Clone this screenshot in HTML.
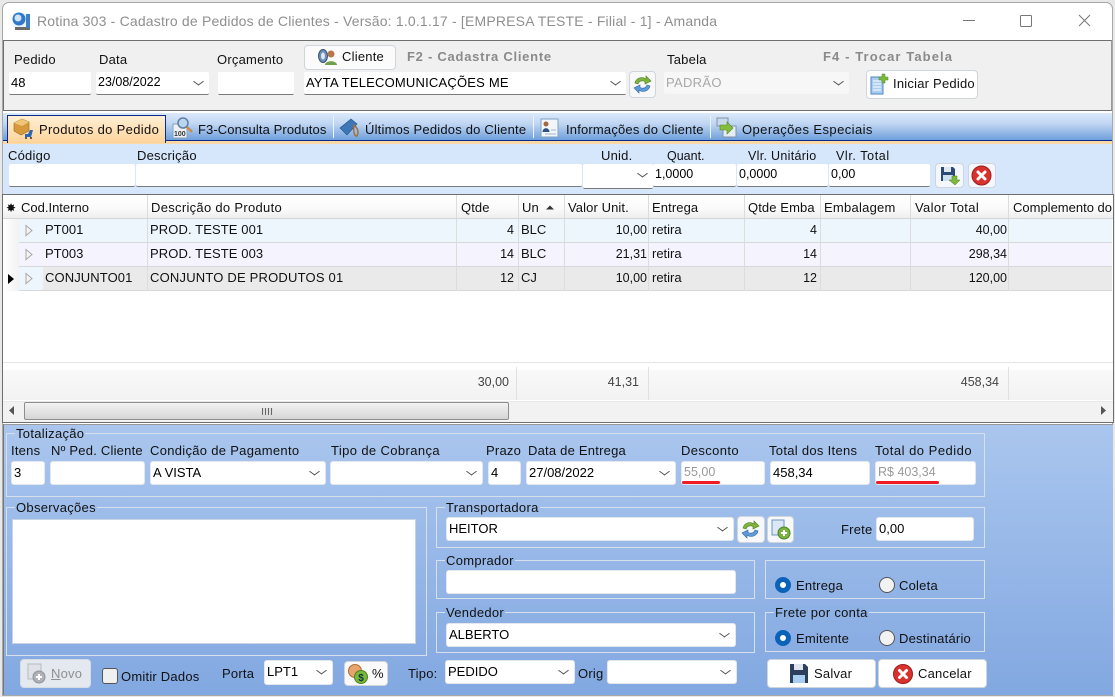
<!DOCTYPE html>
<html lang="pt"><head><meta charset="utf-8"><title>Rotina 303</title>
<style>
*{box-sizing:border-box}
html,body{margin:0;padding:0;width:1115px;height:697px;overflow:hidden;background:#e8e8e8}
body{font:13px "Liberation Sans",sans-serif;color:#111;position:relative}
.a,.t,.i,.b,.g{position:absolute}
.t{white-space:nowrap;line-height:16px;letter-spacing:.22px}
.d{letter-spacing:0}
.i{background:#fff;border-radius:2px;border-bottom:1px solid #7a7a7a;line-height:21px;padding-left:2px;white-space:nowrap;color:#000;font-size:13px}
.n{font-size:12.500px}
.s:after{content:"";position:absolute;right:7px;top:6px;width:6px;height:6px;border-right:1px solid #555;border-bottom:1px solid #555;transform:scale(1.1,.8) rotate(45deg)}
.l{background:#fff;border:1px solid #e4e8ee;border-radius:3px}
.b{background:#fff;border:1px solid #d0d5dc;border-radius:4px;white-space:nowrap}
.g{border:1px solid #d6dfea}
.g>span{position:absolute;left:8px;top:-8px;line-height:15px;padding:0 1px;white-space:nowrap;letter-spacing:.3px}
.c{position:absolute;top:0;height:100%;border-right:1px solid #dcdcdc}
.r{text-align:right;letter-spacing:0;font-size:12.500px}
.h{font-size:13px;letter-spacing:.1px}
svg{position:absolute;overflow:visible}
.rd{position:absolute;width:16px;height:16px;border-radius:50%}
.on{background:#fff;border:5px solid #0a63b8}
.off{background:#f2f2f2;border:1px solid #555}
</style></head><body>
<!-- window -->
<div class="a" style="left:2px;top:2px;width:1111px;height:694px;background:#fff;border:1px solid #a8a8a8;border-radius:7px 7px 0 0"></div>
<svg style="left:11px;top:11px" width="20" height="20" viewBox="0 0 20 20"><path d="M4 15h15v4H4z" fill="#6b6b6b"/><path d="M15 3h4v14h-4z" fill="#3f7fc6"/><path d="M2 2h13v14H2z" fill="#eaf2fb"/><circle cx="8" cy="8" r="6.500" fill="#2f78cb"/><circle cx="7" cy="7" r="3.500" fill="#cfe3f8"/></svg>
<div class="t" style="left:37px;top:13px;font-size:14px;color:#8f8f8f;letter-spacing:.185px">Rotina 303 - Cadastro de Pedidos de Clientes - Versão: 1.0.1.17 - [EMPRESA TESTE - Filial - 1] - Amanda</div>
<svg style="left:960px;top:12px" width="140" height="18" viewBox="0 0 140 18" fill="none" stroke="#777" stroke-width="1"><path d="M3 8.500h12"/><rect x="60.500" y="3.500" width="11" height="11" rx="1"/><path d="M119 3l11 11M130 3l-11 11"/></svg>

<!-- top panel -->
<div class="a" style="left:3px;top:40px;width:1109px;height:71px;background:#f0f0f0;border:1px solid #6e6e6e;border-right-color:#999"></div>
<div class="t" style="left:14px;top:52px">Pedido</div>
<div class="t" style="left:99px;top:52px">Data</div>
<div class="t" style="left:217px;top:52px">Orçamento</div>
<div class="i" style="left:9px;top:72px;width:82px;height:23px">48</div>
<div class="i s n" style="left:96px;top:72px;width:113px;height:23px">23/08/2022</div>
<div class="i" style="left:218px;top:72px;width:76px;height:23px"></div>
<div class="b" style="left:304px;top:45px;width:92px;height:25px;background:#fbfbfb"></div>
<svg style="left:317px;top:48px" width="20" height="18" viewBox="0 0 20 18"><ellipse cx="6" cy="8" rx="4.500" ry="6.500" fill="#6d8fb5" stroke="#34506e"/><ellipse cx="6" cy="8" rx="2" ry="3.500" fill="#dde8f3"/><circle cx="14" cy="6" r="3.500" fill="#b9764a"/><path d="M8 17c0-5 12-5 12 0z" fill="#70a04a"/></svg>
<div class="t" style="left:342px;top:49px">Cliente</div>
<div class="t" style="left:407px;top:49px;font-weight:bold;color:#8a8a8a;letter-spacing:.74px">F2 - Cadastra Cliente</div>
<div class="i s" style="left:304px;top:72px;width:322px;height:23px;letter-spacing:.2px">AYTA TELECOMUNICAÇÕES ME</div>
<div class="b" style="left:629px;top:71px;width:27px;height:27px;background:#f8f8f8"></div>
<svg style="left:632px;top:74px" width="21" height="21" viewBox="0 0 21 21"><path d="M3 9C4 4 10 2 14 5V2l5 5-6 3V7.500C10 6 7 7 6 10z" fill="#7fb53a" stroke="#4d7d1f" stroke-width=".6"/><path d="M18 12c-1 5-7 7-11 4v3l-5-5 6-3v2.500c3 1.500 6 .5 7-2.500z" fill="#5f9bdc" stroke="#30679f" stroke-width=".6"/></svg>
<div class="t" style="left:667px;top:52px">Tabela</div>
<div class="t" style="left:823px;top:49px;font-weight:bold;color:#8a8a8a;letter-spacing:1.1px">F4 - Trocar Tabela</div>
<div class="i s" style="left:664px;top:72px;width:185px;height:22px;background:#f7f7f7;border:0;color:#a8a8a8;letter-spacing:.3px">PADRÃO</div>
<div class="b" style="left:866px;top:70px;width:112px;height:29px"></div>
<svg style="left:869px;top:73px" width="20" height="22" viewBox="0 0 20 22"><path d="M2 4h12v17H2z" fill="#a9cdf2" stroke="#4d86c2"/><path d="M4 8h8M4 11h8M4 14h8M4 17h8" stroke="#fff"/><path d="M13 1h3v3h3v3h-3v3h-3V7h-3V4h3z" fill="#7cba3c" stroke="#4e8a1c" stroke-width=".5"/></svg>
<div class="t" style="left:893px;top:76px">Iniciar Pedido</div>

<!-- tab strip -->
<div class="a" style="left:3px;top:113px;width:1109px;height:28px;background:linear-gradient(#dbe9fb,#c0d6f3 40%,#6f9fdb);border-bottom:1px solid #0b2a8a"></div>
<div class="a" style="left:3px;top:141px;width:1109px;height:3px;background:#fbd9a6"></div>
<div class="a" style="left:7px;top:115px;width:159px;height:28px;background:linear-gradient(#fff0d4,#fdd39b);border:1px solid #0b2a8a;border-bottom:0"></div>
<svg style="left:12px;top:117px" width="22" height="22" viewBox="0 0 22 22"><path d="M2 6l8-4 7 3v9l-8 4-7-4z" fill="#d69a3c" stroke="#a2691c" stroke-width=".6"/><path d="M2 6l8 3 7-4-7-3z" fill="#f0c679"/><path d="M13 20h6l2-7h-3l-2 4h-3z" fill="#2b66b5"/><circle cx="14" cy="21" r="1" fill="#333"/><circle cx="19" cy="21" r="1" fill="#333"/></svg>
<div class="t" style="left:39px;top:122px;letter-spacing:.33px">Produtos do Pedido</div>
<svg style="left:172px;top:117px" width="22" height="22" viewBox="0 0 22 22"><path d="M1 7h14v14H1z" fill="#eef2f7" stroke="#8aa0bb"/><circle cx="11" cy="6" r="5" fill="#bcd5ef" stroke="#5e7fa6" stroke-width="1.500"/><path d="M15 10l5 5" stroke="#c98a4a" stroke-width="2.500"/><text x="2" y="19" font-size="7" font-weight="bold" fill="#333" font-family="Liberation Sans">100</text></svg>
<div class="t" style="left:198px;top:122px;letter-spacing:.1px">F3-Consulta Produtos</div>
<div class="a" style="left:333px;top:116px;width:1px;height:22px;background:#eef4fc"></div>
<svg style="left:339px;top:117px" width="22" height="22" viewBox="0 0 22 22"><path d="M1 11L12 2l6 5L8 18z" fill="#3f76b8" stroke="#24517f" stroke-width=".6"/><path d="M14 8c5 2 6 8 4 11-2 1-4-4-3-9" fill="none" stroke="#a4703d" stroke-width="1.500"/></svg>
<div class="t" style="left:365px;top:122px;letter-spacing:.2px">Últimos Pedidos do Cliente</div>
<div class="a" style="left:533px;top:116px;width:1px;height:22px;background:#eef4fc"></div>
<svg style="left:540px;top:118px" width="19" height="20" viewBox="0 0 19 20"><path d="M1 1h17v18H1z" fill="#f2f6fb" stroke="#7fa0c6"/><circle cx="6" cy="6" r="2.500" fill="#a5673c"/><path d="M2.500 14c0-5 7-5 7 0z" fill="#2f4f7f"/><path d="M5 16h11M11 12h5" stroke="#9db4cf"/></svg>
<div class="t" style="left:566px;top:122px;letter-spacing:.18px">Informações do Cliente</div>
<div class="a" style="left:710px;top:116px;width:1px;height:22px;background:#eef4fc"></div>
<svg style="left:716px;top:117px" width="21" height="21" viewBox="0 0 21 21"><path d="M1 1h11v8H1z" fill="#c9d9ea" stroke="#7d93ad"/><path d="M7 9h13v11H7z" fill="#e6edf5" stroke="#7d93ad"/><path d="M4 8h7V5l6 6-6 6v-4H4z" fill="#86bd3f" stroke="#55861f" stroke-width=".6"/></svg>
<div class="t" style="left:742px;top:122px;letter-spacing:.42px">Operações Especiais</div>

<!-- product entry -->
<div class="a" style="left:3px;top:144px;width:1109px;height:50px;background:#d6e6fb"></div>
<div class="t" style="left:8px;top:148px">Código</div>
<div class="t" style="left:137px;top:148px">Descrição</div>
<div class="t" style="left:601px;top:148px">Unid.</div>
<div class="t" style="left:667px;top:148px;font-size:12.500px;letter-spacing:0">Quant.</div>
<div class="t" style="left:748px;top:148px;font-size:12.500px;letter-spacing:.3px">Vlr. Unitário</div>
<div class="t" style="left:836px;top:148px;font-size:12.500px;letter-spacing:.6px">Vlr. Total</div>
<div class="i" style="left:9px;top:164px;width:126px;height:23px"></div>
<div class="i" style="left:136px;top:164px;width:446px;height:23px"></div>
<div class="i s" style="left:583px;top:164px;width:70px;height:25px"></div>
<div class="i n" style="left:653px;top:164px;width:83px;height:23px">1,0000</div>
<div class="i n" style="left:737px;top:164px;width:91px;height:23px">0,0000</div>
<div class="i n" style="left:829px;top:164px;width:101px;height:23px">0,00</div>
<div class="b" style="left:935px;top:163px;width:29px;height:25px;background:#f4f7fb"></div>
<svg style="left:940px;top:166px" width="20" height="19" viewBox="0 0 20 19"><path d="M1 1h12l2 2v12H1z" fill="#2c4a73"/><path d="M4 1h7v5H4z" fill="#dfe7f1"/><path d="M3 9h10v6H3z" fill="#cfdff2"/><path d="M12 10h5v4h3l-5 5-6-5h3z" fill="#7cb83a" stroke="#507f1c" stroke-width=".5"/></svg>
<div class="b" style="left:968px;top:163px;width:28px;height:25px;background:#f4f7fb"></div>
<svg style="left:971px;top:165px" width="21" height="21" viewBox="0 0 21 21"><circle cx="10.500" cy="10.500" r="9.500" fill="#d8322e" stroke="#9d1f1c"/><path d="M7 7l7 7M14 7l-7 7" stroke="#fff" stroke-width="3" stroke-linecap="round"/></svg>

<!-- grid -->
<div class="a" style="left:2px;top:194px;width:1112px;height:229px;background:#fff;border:1px solid #6e6e6e;overflow:hidden"></div>
<div class="a" style="left:3px;top:195px;width:1110px;height:24px;background:linear-gradient(#fff,#fafafa 60%,#eeeeee);border-bottom:1px solid #d5d5d5">
<div class="c" style="left:144px"></div><div class="c" style="left:453px"></div><div class="c" style="left:515px"></div><div class="c" style="left:561px"></div><div class="c" style="left:645px"></div><div class="c" style="left:741px"></div><div class="c" style="left:817px"></div><div class="c" style="left:907px"></div><div class="c" style="left:1005px"></div>
</div>
<div class="t" style="left:6px;top:200px;font-size:12px">✸</div>
<div class="t h" style="left:21px;top:200px;letter-spacing:0">Cod.Interno</div>
<div class="t h" style="left:151px;top:200px;letter-spacing:.3px">Descrição do Produto</div>
<div class="t h" style="left:461px;top:200px">Qtde</div>
<div class="t h" style="left:522px;top:200px">Un</div>
<svg style="left:546px;top:205px" width="8" height="5" viewBox="0 0 8 5"><path d="M0 4.500L4 .5l4 4z" fill="#333"/></svg>
<div class="t h" style="left:568px;top:200px">Valor Unit.</div>
<div class="t h" style="left:652px;top:200px">Entrega</div>
<div class="t h" style="left:748px;top:200px">Qtde Emba</div>
<div class="t h" style="left:824px;top:200px;letter-spacing:.25px">Embalagem</div>
<div class="t h" style="left:915px;top:200px;letter-spacing:.35px">Valor Total</div>
<div class="a" style="left:1013px;top:200px;width:99px;height:16px;overflow:hidden;white-space:nowrap;line-height:16px;font-size:13px">Complemento do</div>

<!-- rows -->
<div class="a" style="left:19px;top:219px;width:1093px;height:24px;background:#eef6fd;border-bottom:1px solid #d8d8d8"></div>
<div class="a" style="left:19px;top:243px;width:1093px;height:24px;background:#f5f3fd;border-bottom:1px solid #d8d8d8"></div>
<div class="a" style="left:19px;top:267px;width:1093px;height:24px;background:#eaeaea;border-bottom:1px solid #d8d8d8"></div>
<div class="a" style="left:19px;top:267px;width:24px;height:23px;background:#eef6fd"></div>
<div class="a" style="left:3px;top:219px;width:16px;height:72px;background:linear-gradient(90deg,#fff,#f2f2f2)"></div>
<div class="a" style="left:147px;top:219px;width:1px;height:72px;background:#dcdcdc"></div><div class="a" style="left:456px;top:219px;width:1px;height:72px;background:#dcdcdc"></div><div class="a" style="left:518px;top:219px;width:1px;height:72px;background:#dcdcdc"></div><div class="a" style="left:564px;top:219px;width:1px;height:72px;background:#dcdcdc"></div><div class="a" style="left:648px;top:219px;width:1px;height:72px;background:#dcdcdc"></div><div class="a" style="left:744px;top:219px;width:1px;height:72px;background:#dcdcdc"></div><div class="a" style="left:820px;top:219px;width:1px;height:72px;background:#dcdcdc"></div><div class="a" style="left:910px;top:219px;width:1px;height:72px;background:#dcdcdc"></div><div class="a" style="left:1008px;top:219px;width:1px;height:72px;background:#dcdcdc"></div>
<svg style="left:25px;top:225px" width="8" height="60" viewBox="0 0 8 60" fill="#f5f5f5" stroke="#a8a8a8"><path d="M1 .5l6 5-6 5zM1 24.500l6 5-6 5zM1 48.500l6 5-6 5z"/></svg>
<svg style="left:8px;top:274px" width="6" height="10" viewBox="0 0 6 10"><path d="M0 0l6 5-6 5z" fill="#000"/></svg>
<div class="t d" style="left:45px;top:222px">PT001</div><div class="t" style="left:150px;top:222px;letter-spacing:.1px">PROD. TESTE 001</div><div class="t r" style="left:489px;width:25px;top:222px">4</div><div class="t d" style="left:521px;top:222px">BLC</div><div class="t r" style="left:590px;width:57px;top:222px">10,00</div><div class="t d" style="left:652px;top:222px">retira</div><div class="t r" style="left:787px;width:30px;top:222px">4</div><div class="t r" style="left:950px;width:57px;top:222px">40,00</div>
<div class="t d" style="left:45px;top:246px">PT003</div><div class="t" style="left:150px;top:246px;letter-spacing:.1px">PROD. TESTE 003</div><div class="t r" style="left:489px;width:25px;top:246px">14</div><div class="t d" style="left:521px;top:246px">BLC</div><div class="t r" style="left:590px;width:57px;top:246px">21,31</div><div class="t d" style="left:652px;top:246px">retira</div><div class="t r" style="left:787px;width:30px;top:246px">14</div><div class="t r" style="left:950px;width:57px;top:246px">298,34</div>
<div class="t" style="left:45px;top:270px;letter-spacing:.1px">CONJUNTO01</div><div class="t" style="left:150px;top:270px;letter-spacing:.2px">CONJUNTO DE PRODUTOS 01</div><div class="t r" style="left:489px;width:25px;top:270px">12</div><div class="t d" style="left:521px;top:270px">CJ</div><div class="t r" style="left:590px;width:57px;top:270px">10,00</div><div class="t d" style="left:652px;top:270px">retira</div><div class="t r" style="left:787px;width:30px;top:270px">12</div><div class="t r" style="left:950px;width:57px;top:270px">120,00</div>

<!-- footer -->
<div class="a" style="left:3px;top:362px;width:1110px;height:1px;background:#e4e4e4"></div>
<div class="a" style="left:3px;top:370px;width:1110px;height:30px;background:linear-gradient(#f9f9f9,#f2f2f2)"></div>
<div class="a" style="left:516px;top:367px;width:1px;height:33px;background:#e0e0e0"></div><div class="a" style="left:648px;top:367px;width:1px;height:33px;background:#e0e0e0"></div><div class="a" style="left:1008px;top:367px;width:1px;height:33px;background:#e0e0e0"></div>
<div class="t r" style="left:450px;width:59px;top:374px;color:#444">30,00</div>
<div class="t r" style="left:580px;width:59px;top:374px;color:#444">41,31</div>
<div class="t r" style="left:940px;width:59px;top:374px;color:#444">458,34</div>
<!-- scrollbar -->
<div class="a" style="left:3px;top:401px;width:1110px;height:21px;background:#f2f2f2;border-top:1px solid #e8e8e8"></div>
<div class="a" style="left:24px;top:402px;width:485px;height:18px;background:linear-gradient(#f3f3f3,#d5d5d5);border:1px solid #8e8e8e;border-radius:2px"></div>
<div class="a" style="left:262px;top:408px;width:11px;height:7px;background:repeating-linear-gradient(90deg,#666 0 1px,#ddd 1px 3px)"></div>
<svg style="left:9px;top:406px" width="5" height="9" viewBox="0 0 5 9"><path d="M5 0v9L0 4.500z" fill="#555"/></svg>
<svg style="left:1101px;top:406px" width="5" height="9" viewBox="0 0 5 9"><path d="M0 0v9l5-4.500z" fill="#555"/></svg>

<!-- bottom panel -->
<div class="a" style="left:3px;top:424px;width:1110px;height:271px;background:linear-gradient(#aac6ee,#82a8e1);border-left:1px solid #777;border-top:1px solid #999"></div>
<div class="g" style="left:6px;top:433px;width:979px;height:64px"><span style="background:#a9c5ee">Totalização</span></div>
<div class="t" style="left:11px;top:443px">Itens</div>
<div class="t" style="left:51px;top:443px">Nº Ped. Cliente</div>
<div class="t" style="left:150px;top:443px;letter-spacing:.3px">Condição de Pagamento</div>
<div class="t" style="left:331px;top:443px;letter-spacing:.38px">Tipo de Cobrança</div>
<div class="t" style="left:486px;top:443px">Prazo</div>
<div class="t" style="left:528px;top:443px">Data de Entrega</div>
<div class="t" style="left:681px;top:443px;letter-spacing:.38px">Desconto</div>
<div class="t" style="left:769px;top:443px;letter-spacing:.3px">Total dos Itens</div>
<div class="t" style="left:875px;top:443px;letter-spacing:.5px">Total do Pedido</div>
<div class="i l" style="left:11px;top:461px;width:34px;height:24px">3</div>
<div class="i l" style="left:50px;top:461px;width:95px;height:24px"></div>
<div class="i l s" style="left:150px;top:461px;width:176px;height:24px">A VISTA</div>
<div class="i l s" style="left:330px;top:461px;width:153px;height:24px"></div>
<div class="i l" style="left:488px;top:461px;width:33px;height:24px">4</div>
<div class="i l s" style="left:526px;top:461px;width:150px;height:24px">27/08/2022</div>
<div class="i l" style="left:681px;top:461px;width:84px;height:24px;color:#9a9a9a;font-size:12.500px">55,00</div>
<div class="i l" style="left:770px;top:461px;width:100px;height:24px">458,34</div>
<div class="i l" style="left:875px;top:461px;width:101px;height:24px;color:#9a9a9a;font-size:12.500px">R$ 403,34</div>
<div class="a" style="left:682px;top:481px;width:38px;height:3px;background:#ee1c25;border-radius:2px"></div>
<div class="a" style="left:876px;top:481px;width:63px;height:3px;background:#ee1c25;border-radius:2px"></div>

<div class="g" style="left:6px;top:507px;width:421px;height:149px"><span style="background:#9ebdea">Observações</span></div>
<div class="a" style="left:12px;top:519px;width:404px;height:125px;background:#fff;border:1px solid #c8d4e4"></div>

<div class="g" style="left:436px;top:507px;width:549px;height:41px"><span style="background:#9ebdea">Transportadora</span></div>
<div class="i l s" style="left:446px;top:517px;width:288px;height:24px">HEITOR</div>
<div class="b" style="left:737px;top:516px;width:28px;height:27px;background:#f6f8fb"></div>
<svg style="left:740px;top:519px" width="21" height="21" viewBox="0 0 21 21"><path d="M3 9C4 4 10 2 14 5V2l5 5-6 3V7.500C10 6 7 7 6 10z" fill="#7fb53a" stroke="#4d7d1f" stroke-width=".6"/><path d="M18 12c-1 5-7 7-11 4v3l-5-5 6-3v2.500c3 1.500 6 .5 7-2.500z" fill="#5f9bdc" stroke="#30679f" stroke-width=".6"/></svg>
<div class="b" style="left:767px;top:516px;width:27px;height:27px;background:#f6f8fb"></div>
<svg style="left:770px;top:519px" width="21" height="21" viewBox="0 0 21 21"><path d="M2 1h12v15H2z" fill="#dbe7f5" stroke="#6e93c0"/><circle cx="14" cy="14" r="6" fill="#79b443" stroke="#4e8124"/><path d="M14 11v6M11 14h6" stroke="#fff" stroke-width="2"/></svg>
<div class="t" style="left:841px;top:522px">Frete</div>
<div class="i l" style="left:876px;top:517px;width:98px;height:24px">0,00</div>

<div class="g" style="left:436px;top:560px;width:319px;height:39px"><span style="background:#96b7e7">Comprador</span></div>
<div class="i l" style="left:446px;top:570px;width:290px;height:24px"></div>
<div class="g" style="left:765px;top:560px;width:220px;height:39px"></div>
<div class="rd on" style="left:775px;top:577px"></div><div class="t" style="left:796px;top:578px">Entrega</div>
<div class="rd off" style="left:879px;top:577px"></div><div class="t" style="left:899px;top:578px">Coleta</div>

<div class="g" style="left:436px;top:612px;width:319px;height:41px"><span style="background:#8eb1e5">Vendedor</span></div>
<div class="i l s" style="left:446px;top:623px;width:290px;height:24px">ALBERTO</div>
<div class="g" style="left:765px;top:612px;width:220px;height:40px"><span style="background:#8eb1e5">Frete por conta</span></div>
<div class="rd on" style="left:775px;top:630px"></div><div class="t" style="left:796px;top:631px">Emitente</div>
<div class="rd off" style="left:879px;top:630px"></div><div class="t" style="left:899px;top:631px">Destinatário</div>

<!-- bottom row -->
<div class="a" style="left:20px;top:659px;width:71px;height:29px;background:#e4e9f0;border:1px solid #d5dbe4;border-radius:4px"></div>
<svg style="left:27px;top:663px" width="20" height="22" viewBox="0 0 20 22"><path d="M1 1h13v15H1z" fill="#dfe3e8" stroke="#b5bac2"/><circle cx="12" cy="14" r="6" fill="#aeb2b8" stroke="#8f9399"/><path d="M12 11v6M9 14h6" stroke="#fff" stroke-width="2"/></svg>
<div class="t" style="left:51px;top:666px;color:#8f8f8f"><u>N</u>ovo</div>
<div class="a" style="left:102px;top:668px;width:16px;height:16px;background:#f0f0f0;border:1px solid #555;border-radius:3px"></div>
<div class="t" style="left:121px;top:669px">Omitir Dados</div>
<div class="t" style="left:222px;top:666px">Porta</div>
<div class="i l s" style="left:264px;top:660px;width:69px;height:25px">LPT1</div>
<div class="b" style="left:344px;top:661px;width:44px;height:25px;background:#fafafa"></div>
<svg style="left:347px;top:663px" width="22" height="22" viewBox="0 0 22 22"><circle cx="8" cy="8" r="6.500" fill="#e7a46c" stroke="#b06c36"/><circle cx="14" cy="14" r="6.500" fill="#78b83a" stroke="#4c8420"/><text x="11.200" y="18" font-size="10" font-weight="bold" fill="#134" font-family="Liberation Sans">$</text></svg>
<div class="t" style="left:372px;top:666px">%</div>
<div class="t" style="left:408px;top:666px">Tipo:</div>
<div class="i l s" style="left:445px;top:660px;width:130px;height:24px">PEDIDO</div>
<div class="t" style="left:578px;top:666px">Orig</div>
<div class="i l s" style="left:607px;top:660px;width:130px;height:24px"></div>
<div class="b" style="left:767px;top:659px;width:109px;height:29px"></div>
<svg style="left:790px;top:664px" width="18" height="19" viewBox="0 0 18 19"><path d="M0 0h15l3 3v16H0z" fill="#2b3f5c"/><path d="M4 0h9v6H4z" fill="#dfe5ec"/><path d="M3 11h12v8H3z" fill="#a9cdf0"/></svg>
<div class="t" style="left:814px;top:666px">Salvar</div>
<div class="b" style="left:878px;top:659px;width:109px;height:29px"></div>
<svg style="left:893px;top:664px" width="20" height="20" viewBox="0 0 20 20"><circle cx="10" cy="10" r="9.500" fill="#d8322e" stroke="#9d1f1c"/><path d="M6.500 6.500l7 7M13.500 6.500l-7 7" stroke="#fff" stroke-width="3" stroke-linecap="round"/></svg>
<div class="t" style="left:918px;top:666px">Cancelar</div>
</body></html>
